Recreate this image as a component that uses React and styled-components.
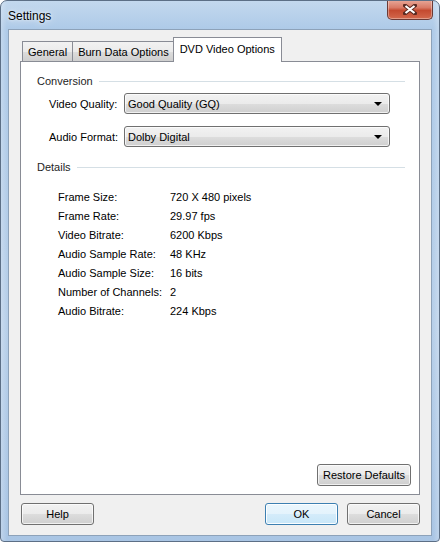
import React from "react"
import styled, { createGlobalStyle } from "styled-components"

const GlobalStyle = createGlobalStyle`
    html, body {
        margin: 0;
        padding: 0;
        background: #ffffff;
    }
    body {
        font-family: "Liberation Sans", Arial, sans-serif;
        font-size: 11px;
        color: #000000;
        white-space: nowrap;
    }
`

const Window = styled.div`
    width: 440px;
    height: 542px;
    box-sizing: border-box;
    display: flex;
    flex-direction: column;
    border: 1px solid #5c6f86;
    border-radius: 7px 7px 4px 4px;
    background:
        linear-gradient(90deg, rgba(255,255,255,0.25) 0, rgba(255,255,255,0) 6px, rgba(255,255,255,0) 432px, rgba(255,255,255,0.25) 438px),
        linear-gradient(180deg, #c3d8ee 0, #aecae8 28px, #b7cfe9 60%, #a9c5e4 100%);
    overflow: hidden;
`

const TitleBar = styled.div`
    height: 28px;
    display: flex;
    align-items: flex-start;
    justify-content: space-between;
    flex: none;
`

const Title = styled.div`
    font-size: 12px;
    padding: 8px 0 0 7px;
    color: #000;
    text-shadow: 0 0 8px rgba(255,255,255,0.9), 0 0 3px rgba(255,255,255,0.8);
`

const CloseButton = styled.div`
    width: 46px;
    height: 20px;
    margin: -1px 6px 0 0;
    box-sizing: border-box;
    border: 1px solid #6b3a35;
    border-top: none;
    border-radius: 0 0 5px 5px;
    background: linear-gradient(180deg, #e9a99a 0, #d97a66 40%, #c44a30 55%, #d3694d 100%);
    box-shadow: inset 0 0 0 1px rgba(255,255,255,0.35);
    display: flex;
    align-items: center;
    justify-content: center;
`

const Client = styled.div`
    flex: 1;
    margin: 0 7px 5px 7px;
    box-sizing: border-box;
    background: #f0f0f0;
    border: 1px solid #8da2b9;
    display: flex;
    flex-direction: column;
    padding: 8px 11px 0 11px;
`

const TabRow = styled.div`
    display: flex;
    align-items: flex-end;
    height: 24px;
    padding-left: 2px;
    position: relative;
    z-index: 1;
    margin-bottom: -1px;
`

const Tab = styled.div`
    box-sizing: border-box;
    height: ${(p) => (p.$active ? "25px" : "21px")};
    padding: ${(p) => (p.$active ? "5px 6px 0 6px" : "4px 5px 0 5px")};
    margin-left: ${(p) => (p.$active ? "-2px" : "-1px")};
    margin-right: ${(p) => (p.$active ? "-2px" : "0")};
    border: 1px solid #898c95;
    border-bottom: ${(p) => (p.$active ? "none" : "1px solid #898c95")};
    background: ${(p) =>
        p.$active ? "#ffffff" : "linear-gradient(180deg, #f2f2f2 0, #ebebeb 50%, #dddddd 51%, #cfcfcf 100%)"};
    font-size: 11px;
    position: relative;
    z-index: ${(p) => (p.$active ? 2 : 1)};
    &:first-child {
        margin-left: 0;
    }
`

const Panel = styled.div`
    height: 434px;
    box-sizing: border-box;
    background: #ffffff;
    border: 1px solid #898c95;
    display: flex;
    flex-direction: column;
    padding: 12px 14px 8px 16px;
`

const GroupHeader = styled.div`
    display: flex;
    align-items: center;
    gap: 6px;
    height: 14px;
    font-size: 11px;
    color: #1e1e1e;
    margin-top: ${(p) => p.$top || 0}px;
    &::after {
        content: "";
        flex: 1;
        height: 1px;
        background: #d5dfe5;
        border-bottom: 1px solid #ffffff;
        margin-top: 1px;
    }
`

const FieldRow = styled.div`
    display: flex;
    align-items: center;
    margin: ${(p) => p.$top}px 0 0 12px;
`

const FieldLabel = styled.div`
    width: 75px;
    font-size: 11px;
`

const Combo = styled.div`
    width: 266px;
    height: 21px;
    box-sizing: border-box;
    border: 1px solid #707070;
    border-radius: 3px;
    background: linear-gradient(180deg, #f2f2f2 0, #ebebeb 50%, #dddddd 51%, #cfcfcf 100%);
    box-shadow: inset 0 0 0 1px rgba(255,255,255,0.7);
    display: flex;
    align-items: center;
    justify-content: space-between;
    padding: 0 7px 0 3px;
    font-size: 11px;
`

const Arrow = styled.div`
    width: 0;
    height: 0;
    border-left: 4px solid transparent;
    border-right: 4px solid transparent;
    border-top: 4px solid #000;
`

const Details = styled.div`
    display: grid;
    grid-template-columns: 112px auto;
    grid-auto-rows: 19px;
    align-items: center;
    margin: 13px 0 0 21px;
    font-size: 11px;
`

const Spacer = styled.div`
    flex: 1;
`

const ButtonRow = styled.div`
    display: flex;
    justify-content: flex-end;
    gap: 9px;
    margin-right: ${(p) => p.$right || 0}px;
`

const Button = styled.div`
    width: ${(p) => p.$width || 73}px;
    height: 22px;
    box-sizing: border-box;
    border: 1px solid ${(p) => (p.$focused ? "#3c7fb1" : "#707070")};
    border-radius: 3px;
    background: ${(p) =>
        p.$focused
            ? "linear-gradient(180deg, #eaf6fd 0, #e4f3fc 50%, #d4ecfa 51%, #c8e6f8 100%)"
            : "linear-gradient(180deg, #f2f2f2 0, #ebebeb 50%, #dddddd 51%, #cfcfcf 100%)"};
    box-shadow: inset 0 0 0 1px ${(p) => (p.$focused ? "rgba(255,255,255,0.9)" : "rgba(255,255,255,0.7)")};
    display: flex;
    align-items: center;
    justify-content: center;
    font-size: 11px;
`

const Footer = styled.div`
    display: flex;
    justify-content: space-between;
    align-items: center;
    margin-top: 8px;
    padding: 0 0 0 1px;
`

const details = [
    ["Frame Size:", "720 X 480 pixels"],
    ["Frame Rate:", "29.97 fps"],
    ["Video Bitrate:", "6200 Kbps"],
    ["Audio Sample Rate:", "48 KHz"],
    ["Audio Sample Size:", "16 bits"],
    ["Number of Channels:", "2"],
    ["Audio Bitrate:", "224 Kbps"],
]

export default function App() {
    return (
        <>
            <GlobalStyle />
            <Window>
                <TitleBar>
                    <Title>Settings</Title>
                    <CloseButton>
                        <svg width="14" height="11" viewBox="0 0 14 11">
                            <path d="M2 1.5 L12 9.5 M12 1.5 L2 9.5" stroke="#5a2a22" strokeWidth="4" strokeLinecap="square" />
                            <path d="M2.5 2 L11.5 9 M11.5 2 L2.5 9" stroke="#ffffff" strokeWidth="2.2" />
                        </svg>
                    </CloseButton>
                </TitleBar>
                <Client>
                    <TabRow>
                        <Tab>General</Tab>
                        <Tab>Burn Data Options</Tab>
                        <Tab $active>DVD Video Options</Tab>
                    </TabRow>
                    <Panel>
                        <GroupHeader>Conversion</GroupHeader>
                        <FieldRow $top={5}>
                            <FieldLabel>Video Quality:</FieldLabel>
                            <Combo>
                                Good Quality (GQ)
                                <Arrow />
                            </Combo>
                        </FieldRow>
                        <FieldRow $top={12}>
                            <FieldLabel>Audio Format:</FieldLabel>
                            <Combo>
                                Dolby Digital
                                <Arrow />
                            </Combo>
                        </FieldRow>
                        <GroupHeader $top={13}>Details</GroupHeader>
                        <Details>
                            {details.map(([k, v]) => (
                                <React.Fragment key={k}>
                                    <div>{k}</div>
                                    <div>{v}</div>
                                </React.Fragment>
                            ))}
                        </Details>
                        <Spacer />
                        <ButtonRow $right={-6}>
                            <Button $width={94}>Restore Defaults</Button>
                        </ButtonRow>
                    </Panel>
                    <Footer>
                        <Button>Help</Button>
                        <ButtonRow>
                            <Button $focused>OK</Button>
                            <Button>Cancel</Button>
                        </ButtonRow>
                    </Footer>
                </Client>
            </Window>
        </>
    )
}
